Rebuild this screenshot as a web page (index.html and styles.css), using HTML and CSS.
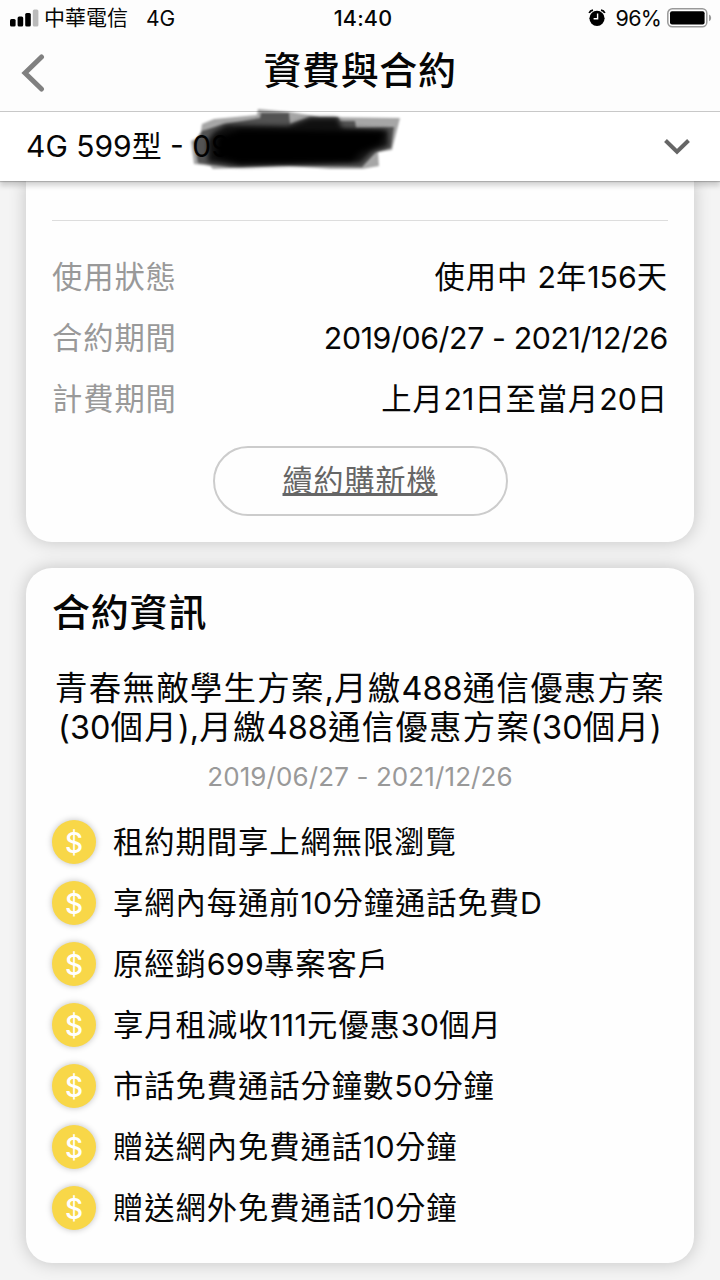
FILE: index.html
```html
<!DOCTYPE html>
<html lang="zh-Hant">
<head>
    <meta charset="UTF-8">
    <meta name="viewport" content="width=device-width, initial-scale=1.0">
    <title>資費與合約</title>
    <link rel="stylesheet" href="styles.css">
</head>
<body>
    <div class="status-bar">
        <div class="status-left">
            <svg class="signal" width="30" height="18" viewBox="0 0 30 18">
                <rect x="0" y="10" width="5.6" height="7.5" rx="1.5"/>
                <rect x="7.6" y="7.5" width="5.6" height="10" rx="1.5"/>
                <rect x="15.2" y="4" width="5.6" height="13.5" rx="1.5"/>
                <rect x="22.8" y="0.5" width="5.6" height="17" rx="1.5" fill="#bbb"/>
            </svg>
            <span class="carrier">中華電信</span>
            <span class="network">4G</span>
        </div>
        <div class="clock">14:40</div>
        <div class="status-right">
            <svg class="alarm" width="18" height="18" viewBox="0 0 18 18">
                <circle cx="9" cy="9.3" r="7.6"/>
                <path d="M1.2 4 Q2.2 1.6 5 1.2M16.8 4 Q15.8 1.6 13 1.2" fill="none" stroke="#000" stroke-width="1.8"/>
                <path d="M9.6 4.6v5.2H5.6" fill="none" stroke="#fff" stroke-width="1.4"/>
            </svg>
            <span class="percent">96%</span>
            <svg class="battery" width="45" height="20" viewBox="0 0 45 20">
                <rect x="0.8" y="0.8" width="39" height="18" rx="4.5" fill="#fff" stroke="#999" stroke-width="1.5"/>
                <rect x="3" y="3.2" width="34.6" height="13.2" rx="2"/>
                <path d="M42 6.5q2.2 1 2.2 3.4t-2.2 3.4z" fill="#999"/>
            </svg>
        </div>
    </div>

    <header class="navbar">
        <svg class="back" width="24" height="38" viewBox="0 0 24 38">
            <path d="M20.5 3 L4 19 L20.5 35" fill="none" stroke="#808080" stroke-width="5" stroke-linecap="round"/>
        </svg>
        <h1>資費與合約</h1>
    </header>

    <div class="selector">
        <div class="plan">4G 599型 - <span class="phone">09</span></div>
        <svg class="scribble" width="230" height="76" viewBox="0 0 230 76">
            <defs>
                <filter id="soft"><feGaussianBlur stdDeviation="1"/></filter>
                <filter id="softer" x="-10%" y="-20%" width="120%" height="140%"><feGaussianBlur stdDeviation="2.6"/></filter>
            </defs>
            <g filter="url(#soft)">
                <path d="M11 41 L20 37 L22 24 L34 19 L77 15 L78 9 L110 12 L140 17 L220 18 L212 50 L198 52 L199 66 L182 69 L150 69 L110 66 L33 69 L30 66 L14 64 Z" opacity="0.35"/>
                <path d="M14 42 L22 31 L44 24 L80 18 L81 13 L109 13 L110 24 L130 17 L158 17 L160 21 L175 21 L176 28 L214 27 L211 48 L196 52 L182 67 L100 65 L50 67 L18 63 Z" opacity="0.5"/>
            </g>
            <path d="M28 40 L34 32 L46 25 L108 26 L130 18 L157 18 L162 28 L208 30 L208 46 L192 51 L180 63 L60 66 L28 62 Z" opacity="0.8" filter="url(#softer)"/>
            <path d="M38 37 L60 30 L204 32 L200 44 L180 52 L172 61 L60 63 L36 57 Z" filter="url(#softer)"/>
        </svg>
        <svg class="arrow" width="28" height="18" viewBox="0 0 28 18">
            <path d="M2.5 2.5 L14 13.8 L25.5 2.5" fill="none" stroke="#666" stroke-width="4"/>
        </svg>
    </div>

    <main>
        <section class="card status-card">
            <hr>
            <div class="row"><span class="label">使用狀態</span><span class="value">使用中 <i>2</i>年<i>156</i>天</span></div>
            <div class="row"><span class="label">合約期間</span><span class="value"><i>2019/06/27 - 2021/12/26</i></span></div>
            <div class="row"><span class="label">計費期間</span><span class="value">上月<i>21</i>日至當月<i>20</i>日</span></div>
            <a class="button">續約購新機</a>
        </section>

        <section class="card info-card">
            <h2>合約資訊</h2>
            <p class="plan-name">青春無敵學生方案<i>,</i>月繳<i>488</i>通信優惠方案<br><i>(30</i>個月<i>),</i>月繳<i>488</i>通信優惠方案<i>(30</i>個月<i>)</i></p>
            <p class="period">2019/06/27 - 2021/12/26</p>
            <ul class="benefits">
                <li><b class="coin">$</b><span>租約期間享上網無限瀏覽</span></li>
                <li><b class="coin">$</b><span>享網內每通前<i>10</i>分鐘通話免費<i>D</i></span></li>
                <li><b class="coin">$</b><span>原經銷<i>699</i>專案客戶</span></li>
                <li><b class="coin">$</b><span>享月租減收<i>111</i>元優惠<i>30</i>個月</span></li>
                <li><b class="coin">$</b><span>市話免費通話分鐘數<i>50</i>分鐘</span></li>
                <li><b class="coin">$</b><span>贈送網內免費通話<i>10</i>分鐘</span></li>
                <li><b class="coin">$</b><span>贈送網外免費通話<i>10</i>分鐘</span></li>
            </ul>
        </section>
    </main>
</body>
</html>
```
FILE: styles.css
```css
* {
    box-sizing: border-box;
}
body {
    margin: 0;
    height: 1280px;
    overflow: hidden;
    background: #f4f4f4;
    color: #060606;
    font-family: Inter, "Noto Sans CJK TC", sans-serif;
    font-size: 30px;
}
h1, h2, p, ul {
    margin: 0;
    padding: 0;
}
i {
    font-style: normal;
    letter-spacing: 0;
}
.status-bar {
    display: grid;
    grid-template-columns: 1fr auto 1fr;
    align-items: center;
    height: 36px;
    padding: 0 8px 0 10px;
    background: #fdfdfd;
    font-size: 22px;
}
.status-left, .status-right {
    display: flex;
    align-items: center;
}
.status-right {
    justify-content: flex-end;
}
.carrier {
    margin-left: 4px;
    font-size: 21px;
    line-height: 32px;
}
.network {
    margin-left: 18px;
    font-size: 21px;
}
.clock {
    margin-left: 4px;
    font-size: 21.5px;
    font-weight: 500;
    letter-spacing: 0.2px;
}
.percent {
    margin: 0 6px 0 10px;
    font-size: 21.5px;
    letter-spacing: -0.8px;
}
.navbar {
    display: grid;
    grid-template-columns: 52px 1fr 52px;
    align-items: center;
    height: 76px;
    padding-bottom: 2px;
    background: #fdfdfd;
    border-bottom: 1px solid #c8c8c8;
}
.back {
    margin-left: 21px;
}
h1 {
    padding-bottom: 5px;
    text-align: center;
    font-size: 38px;
    font-weight: 500;
    line-height: 66px;
    letter-spacing: 0.6px;
}
.selector {
    position: relative;
    display: flex;
    justify-content: space-between;
    align-items: center;
    height: 69px;
    padding: 0 29px 0 26px;
    background: #fff;
    box-shadow: 0 5px 5px rgba(0, 0, 0, 0.16), 0 1px 1px rgba(0, 0, 0, 0.2);
    z-index: 2;
}
.plan {
    padding-bottom: 5px;
    letter-spacing: 0;
}
.scribble {
    position: absolute;
    left: 180px;
    top: -12px;
}
main {
    display: flex;
    flex-direction: column;
    gap: 26px;
    padding: 0 26px;
}
.card {
    padding: 0 26px;
    background: #fefefe;
    border-radius: 26px;
    box-shadow: 0 0 18px rgba(0, 0, 0, 0.2);
}
.status-card {
    height: 361px;
    border-radius: 0 0 26px 26px;
}
hr {
    height: 1px;
    margin: 39px 0 26px;
    border: none;
    background: #ddd;
}
.row {
    display: flex;
    justify-content: space-between;
    height: 61px;
    font-size: 30.3px;
    line-height: 61px;
    letter-spacing: 0.9px;
}
.value > i:only-child {
    letter-spacing: -0.4px;
}
.label {
    color: #999;
}
.button {
    display: block;
    width: 295px;
    height: 70px;
    margin: 16px auto 0;
    border: 2px solid #ccc;
    border-radius: 35px;
    text-align: center;
    line-height: 65px;
    color: #666;
    letter-spacing: 1px;
    text-decoration: underline;
}
.info-card {
    height: 695px;
}
h2 {
    padding-top: 15px;
    font-size: 38px;
    font-weight: 500;
    line-height: 58px;
    letter-spacing: 0.8px;
}
.plan-name {
    margin: 28px -10px 0;
    text-align: center;
    font-size: 32.4px;
    line-height: 39px;
    letter-spacing: 1.3px;
    white-space: nowrap;
}
.plan-name i {
    letter-spacing: 0.1px;
}
.period {
    margin-top: 10px;
    text-align: center;
    font-size: 26px;
    line-height: 40px;
    letter-spacing: 0.1px;
    color: #999;
}
.benefits {
    margin-top: 14px;
    list-style: none;
}
.benefits li {
    display: flex;
    align-items: center;
    height: 61px;
    font-size: 30.3px;
    letter-spacing: 0.95px;
}
.benefits span {
    padding-bottom: 4px;
}
.benefits i {
    letter-spacing: 0.3px;
}
.coin {
    width: 44px;
    height: 44px;
    margin-right: 17px;
    border-radius: 50%;
    background: #f8d748;
    color: #fff;
    font-size: 28px;
    font-weight: 500;
    line-height: 46px;
    text-align: center;
    letter-spacing: 0;
    box-shadow: 0 0 6px rgba(0, 0, 0, 0.25);
}
```
